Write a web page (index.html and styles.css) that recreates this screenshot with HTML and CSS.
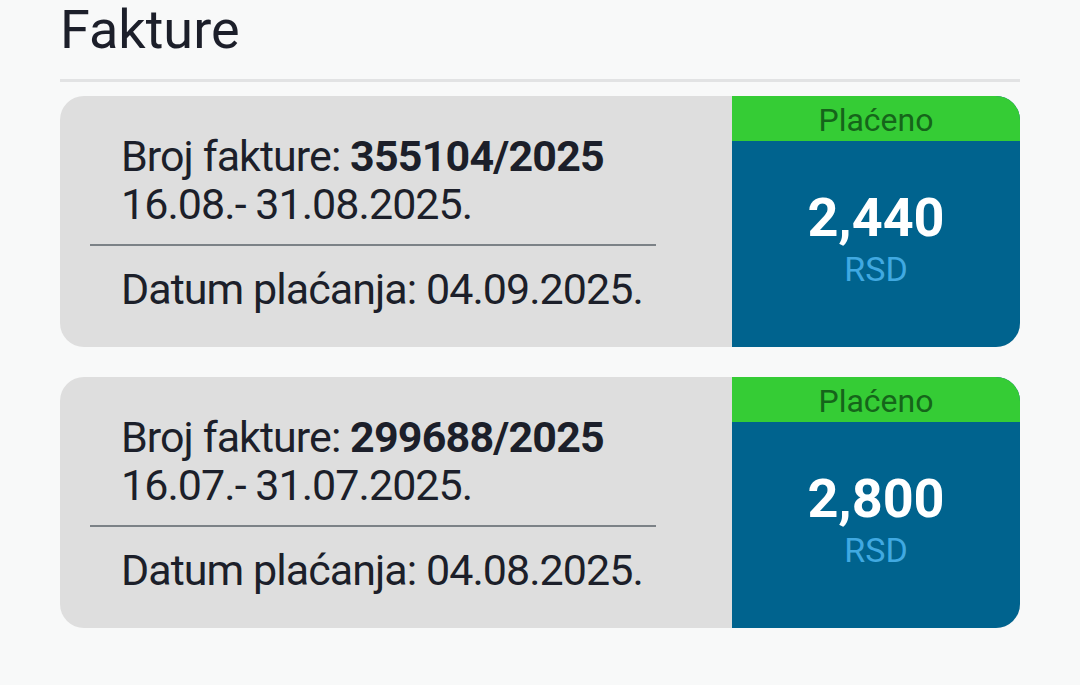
FILE: index.html
```html
<!DOCTYPE html>
<html lang="sr">
<head>
  <meta charset="UTF-8" />
  <meta name="viewport" content="width=device-width, initial-scale=1.0"/>
  <title>Fakture</title>
  <link rel="stylesheet" href="styles.css">
</head>
<body>
  <div class="page">
    <h1 class="title">Fakture</h1>
    <div class="rule"></div>

    <div class="card">
      <div class="info">
        <div class="line">Broj fakture: <b>355104/2025</b></div>
        <div class="line">16.08.- 31.08.2025.</div>
        <div class="sep"></div>
        <div class="line">Datum plaćanja: 04.09.2025.</div>
      </div>
      <div class="amount">
        <div class="status">Plaćeno</div>
        <div class="sum">
          <div class="value">2,440</div>
          <div class="currency">RSD</div>
        </div>
      </div>
    </div>

    <div class="card">
      <div class="info">
        <div class="line">Broj fakture: <b>299688/2025</b></div>
        <div class="line">16.07.- 31.07.2025.</div>
        <div class="sep"></div>
        <div class="line">Datum plaćanja: 04.08.2025.</div>
      </div>
      <div class="amount">
        <div class="status">Plaćeno</div>
        <div class="sum">
          <div class="value">2,800</div>
          <div class="currency">RSD</div>
        </div>
      </div>
    </div>
  </div>
</body>
</html>
```

FILE: styles.css
```css
body {
  margin: 0;
  background: #f8f9f9;
  font-family: Roboto, "Noto Sans", sans-serif;
  color: #1c1f2a;
}
.page {
  padding: 0 60px;
}
.title {
  margin: 0;
  padding: 1px 0 0 0;
  height: 62px;
  font-size: 54px;
  font-weight: 400;
  line-height: 58px;
}
.rule {
  height: 3px;
  background: #e2e3e4;
  margin: 16px 0 14px;
}
.card {
  display: flex;
  height: 251px;
  border-radius: 24px;
  overflow: hidden;
  background: #dedede;
  margin-bottom: 30px;
}
.info {
  flex: 1;
  padding: 36px 76px 0 30px;
}
.line {
  padding-left: 31px;
  font-size: 43px;
  line-height: 48px;
  letter-spacing: -0.95px;
}
.line b {
  font-weight: 700;
  letter-spacing: -0.8px;
}
.sep {
  height: 2px;
  background: #7c8287;
  margin: 16px 0 19px;
}
.amount {
  width: 288px;
  display: flex;
  flex-direction: column;
  background: #00638e;
}
.status {
  height: 45px;
  background: #35cc35;
  color: #15651a;
  text-align: center;
  font-size: 32px;
  line-height: 48px;
}
.sum {
  text-align: center;
  padding-top: 49px;
}
.value {
  color: #fff;
  font-size: 54px;
  font-weight: 700;
  line-height: 56px;
}
.currency {
  color: #40a9e1;
  font-size: 34px;
  line-height: 46px;
}
```
